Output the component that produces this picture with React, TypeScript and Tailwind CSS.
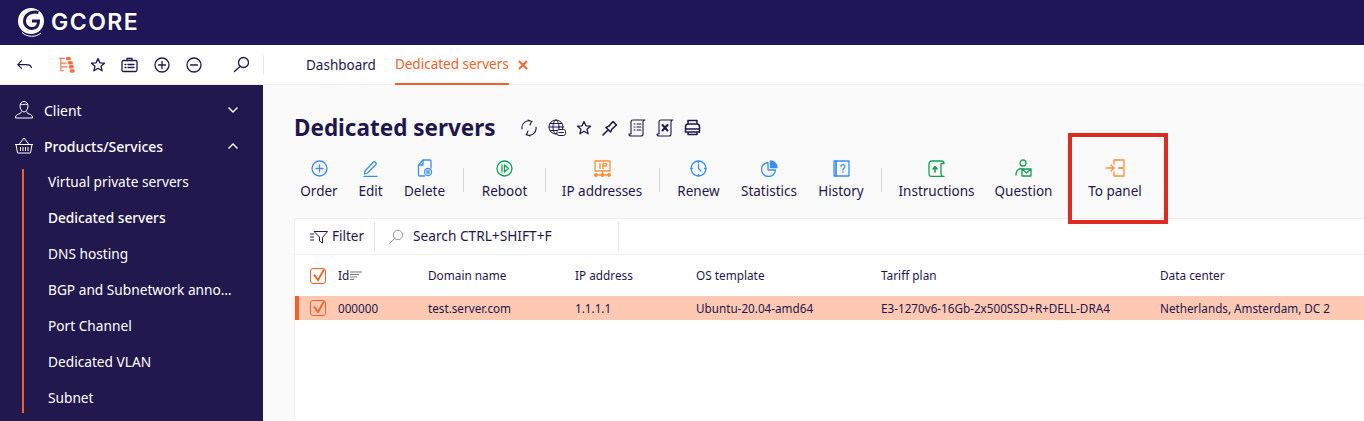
import React from "react";

const navy = "#1f1650";

function Ic({ children, w = 20, h = 20, vb = "0 0 20 20", c = navy, sw = 1.3 }: { children: React.ReactNode; w?: number; h?: number; vb?: string; c?: string; sw?: number }) {
  return (
    <svg width={w} height={h} viewBox={vb} fill="none" stroke={c} strokeWidth={sw} strokeLinecap="round" strokeLinejoin="round" className="shrink-0">
      {children}
    </svg>
  );
}

const Star = ({ c = navy }: { c?: string }) => (
  <Ic w={16} h={16} c={c} vb="0 0 16 16"><path d="M8 1.500l1.900 4.300 4.600.4-3.500 3 1.100 4.600L8 11.300l-4.100 2.500L5 9.200l-3.500-3 4.600-.4z" /></Ic>
);

function Action({ label, icon, cls }: { label: string; icon: React.ReactNode; cls: string }) {
  return (
    <div className={`flex flex-col items-center shrink-0 ${cls}`}>
      <div className="h-[20px] flex items-center justify-center">{icon}</div>
      <div className="mt-[4px] text-[13.5px] leading-[18px] whitespace-nowrap text-[#1f1650]">{label}</div>
    </div>
  );
}

const Sep = ({ cls }: { cls: string }) => <div className={`w-px h-[24px] bg-[#d5d5d9] shrink-0 mt-[10px] ${cls}`} />;

const blue = "#3b8ff3";
const green = "#12a150";
const orange = "#f7923a";

function Check() {
  return (
    <div className="w-[16px] h-[16px] rounded-[3px] border border-[#f4602a] flex items-center justify-center relative">
      <svg width="16" height="16" viewBox="0 0 16 16" fill="none" stroke="#f4602a" strokeWidth="1.800" className="absolute -top-[2px] left-0">
        <path d="M3 7.500l4 5.500L13 2.500" />
      </svg>
    </div>
  );
}

const sub = ["Virtual private servers", "Dedicated servers", "DNS hosting", "BGP and Subnetwork anno…", "Port Channel", "Dedicated VLAN", "Subnet"];

const cols: [string, string, string][] = [
  ["w-[147px]", "Domain name", "test.server.com"],
  ["w-[121px]", "IP address", "1.1.1.1"],
  ["w-[185px]", "OS template", "Ubuntu-20.04-amd64"],
  ["w-[279px]", "Tariff plan", "E3-1270v6-16Gb-2x500SSD+R+DELL-DRA4"],
  ["w-[190px]", "Data center", "Netherlands, Amsterdam, DC 2"],
];

export default function App() {
  return (
    <div className="w-[1364px] h-[421px] overflow-hidden bg-white flex flex-col text-[#1f1650] font-['Noto_Sans','Open_Sans',sans-serif]">
      <header className="h-[45px] shrink-0 bg-[#1e1656] flex items-center pl-[17px]">
        <svg width="28" height="31" viewBox="0 0 28 31" className="shrink-0">
          <circle cx="14" cy="14" r="13" fill="#fff" />
          <path d="M21.500 5.500C14 3.500 7.500 8 7.500 14c0 5 4 7.500 7.500 7.500 4.500 0 6.500-3.500 6.500-7.500H15" fill="none" stroke="#1e1656" strokeWidth="3" />
          <path d="M5 25.500c5 5 14 5 19 .5" fill="none" stroke="#fff" strokeWidth="1" />
        </svg>
        <span className="ml-[6px] text-white font-['Inter',sans-serif] font-semibold text-[23px] tracking-[1.500px] leading-none">GCORE</span>
      </header>

      <div className="h-[40px] shrink-0 bg-white flex items-center border-b border-[#eeeeef]">
        <div className="w-[264px] h-[20px] flex items-center pl-[16px] relative">
          <Ic w={18} h={12} vb="0 0 20 14"><path d="M6 2L1.500 6.500 6 11M1.500 6.500h10c3 0 5.500.8 6 3.500" /></Ic>
          <div className="ml-[24px]">
            <svg width="17" height="18" viewBox="0 0 18 18" fill="none" stroke="#f77b4a" strokeWidth="1.200">
              <path d="M1 2h6M3 2v13h3M3 7h6M3 11h7" />
              <rect x="9" y="1" width="4" height="2.500" fill="#f4602a" rx=".6" />
              <rect x="11" y="5.500" width="4" height="2.500" fill="#f4602a" rx=".6" />
              <rect x="12" y="9.500" width="4" height="2.500" fill="#f4602a" rx=".6" />
              <rect x="13" y="14" width="4" height="2.500" fill="#f4602a" rx=".6" />
            </svg>
          </div>
          <div className="ml-[15px]"><Star /></div>
          <div className="ml-[15px]">
            <Ic w={17} h={16} vb="0 0 17 16"><rect x="1" y="3.500" width="15" height="11" rx="1.500" /><path d="M6 3.500V1.500h5v2M4 7.500h1M4 10.500h1M7 7.500h6M7 10.500h6" /></Ic>
          </div>
          <div className="ml-[16px]">
            <Ic w={16} h={16} vb="0 0 16 16"><circle cx="8" cy="8" r="7" /><path d="M8 4.500v7M4.500 8h7" /></Ic>
          </div>
          <div className="ml-[16px]">
            <Ic w={16} h={16} vb="0 0 16 16"><circle cx="8" cy="8" r="7" /><path d="M4.500 8h7" /></Ic>
          </div>
          <div className="ml-[31px]">
            <Ic w={17} h={17} vb="0 0 17 17"><circle cx="10.500" cy="6.500" r="5" /><path d="M7 10.500L1.500 15.500" /></Ic>
          </div>
          <div className="absolute right-0 top-0 h-[20px] w-px bg-[#e8e8ea]" />
        </div>
        <div className="ml-[42px] text-[13.5px] leading-[40px]">Dashboard</div>
        <div className="ml-[19px] h-[40px] flex items-center text-[13.5px] text-[#f4602a]">
          <div className="h-[40px] leading-[38px] border-b-2 border-[#f4602a] whitespace-nowrap">Dedicated servers</div>
          <svg width="10" height="10" viewBox="0 0 10 10" stroke="#f4602a" strokeWidth="1.800" className="ml-[9px] mt-[1px]"><path d="M1 1l8 8M9 1L1 9" /></svg>
        </div>
      </div>

      <div className="flex flex-1 min-h-0">
        <aside className="w-[263px] shrink-0 bg-[#21184e] text-white text-[14px] pt-[7px]">
          <div className="h-[36px] flex items-center pl-[14px] pr-[24px]">
            <svg width="20" height="20" viewBox="0 0 20 20" fill="none" stroke="#fff" strokeWidth="1"><path d="M6 6c0-3 2-4.500 4-4.500S14 3 14 6s-2 6-4 6-4-3-4-6zM6.500 4C9 5.500 11 3.500 13 4.500M7.500 11.500c-.3 2-2 2-4 3-1.500.7-2 2-2 3.500h17c0-1.500-.5-2.800-2-3.500-2-1-3.700-1-4-3" /></svg>
            <span className="ml-[10px] flex-1">Client</span>
            <svg width="12" height="8" viewBox="0 0 12 8" fill="none" stroke="#fff" strokeWidth="1.400"><path d="M1.500 1.500L6 6l4.500-4.500" /></svg>
          </div>
          <div className="h-[36px] flex items-center pl-[14px] pr-[24px]">
            <svg width="20" height="20" viewBox="0 0 20 20" fill="none" stroke="#fff" strokeWidth="1"><path d="M1 8.500h18M2 8.500l1.500 8.500h13L18 8.500M5 8.500L10 2l5 6.500M6.500 11v4M9 11v4M11.500 11v4M14 11v4" /></svg>
            <span className="ml-[10px] flex-1 font-medium">Products/Services</span>
            <svg width="12" height="8" viewBox="0 0 12 8" fill="none" stroke="#fff" strokeWidth="1.400"><path d="M1.500 6.500L6 2l4.500 4.500" /></svg>
          </div>
          <div className="ml-[22px] relative">
            <div className="absolute left-0 top-[5px] bottom-[3px] w-[2px] bg-[#f4602a]" />
            {sub.map((s, i) => (
              <div key={s} className={`h-[36px] flex items-center pl-[26px] whitespace-nowrap text-[13.7px] ${i === 1 ? "font-medium" : ""}`}>{s}</div>
            ))}
          </div>
        </aside>

        <main className="flex-1 bg-[#fafafa] pl-[31px] min-w-0">
          <div className="flex items-center pt-[26px] h-[59px]">
            <h1 className="text-[22.5px] font-bold leading-[32px] whitespace-nowrap w-[226px]">Dedicated servers</h1>
            <div className="flex items-center gap-[10px]">
              <Ic w={18} h={18} vb="0 0 18 18" sw={1.100}><path d="M2 10A7 7 0 0 1 12 2.500M6 15.500A7 7 0 0 0 16 8M8 1l3.500 1.500L10 6M10 17l-3.500-1.500L8 12" /></Ic>
              <Ic w={18} h={18} vb="0 0 18 18" sw={1}><circle cx="8" cy="8" r="7" /><ellipse cx="8" cy="8" rx="3" ry="7" /><path d="M1 8h14M2 4.500h12M2 11.500h12" /><rect x="9" y="10.500" width="8.500" height="6" rx="2" fill="#fafafa" /><path d="M11 13.500h4.500" /></Ic>
              <Star />
              <Ic w={16} h={16} vb="0 0 16 16"><path d="M1 15l5-5M4 7.500L8.500 12 10 9l4.500-4L11 1.500l-4 4.500z" strokeWidth="1.600" /></Ic>
              <Ic w={18} h={18} vb="0 0 18 18" sw={1.100}><path d="M1 15c0 1.500 1 2 2 2h10c1 0 2-.5 2-2V3c0-1 .8-2 2-2H5c-1 0-2 1-2 2v12H1zM6 5h1M6 8h1M6 11h1M9 5h4M9 8h4M9 11h4" /></Ic>
              <Ic w={18} h={18} vb="0 0 18 18" sw={1.100}><path d="M1 15c0 1.500 1 2 2 2h10c1 0 2-.5 2-2V3c0-1 .8-2 2-2H5c-1 0-2 1-2 2v12H1z" /><path d="M6.500 6l5 5.500M11.500 6l-5 5.500" strokeWidth="2" /></Ic>
              <Ic w={17} h={17} vb="0 0 17 17"><path d="M4 5V1.500h9V5M1.500 8c0-2 1-3 2.500-3h9c1.500 0 2.500 1 2.500 3v5h-14zM4 13v2.500h9V13M1.500 10h14" strokeWidth="1.500" /></Ic>
            </div>
          </div>

          <div className="flex items-start mt-[14px] h-[60px] relative">
            <Action cls="ml-[6px] w-[38px]" label="Order" icon={<Ic w={17} h={17} vb="0 0 17 17" c={blue}><circle cx="8.500" cy="8.500" r="7.500" /><path d="M8.500 5v7M5 8.500h7" /></Ic>} />
            <Action cls="ml-[20px] w-[25px]" label="Edit" icon={<Ic w={16} h={17} vb="0 0 16 17" c={blue}><path d="M2 11L10.500 2c1-1 3.500 1.500 2.500 2.500L4.500 13 1.500 14zM1 16.500h13" /></Ic>} />
            <Action cls="ml-[20px] w-[43px]" label="Delete" icon={<Ic w={16} h={18} vb="0 0 16 18" c={blue}><path d="M6 1h7c.5 0 1 .5 1 1v7M6 1L1.500 6v10c0 .5.5 1 1 1h5M6 1v5H1.500" /><circle cx="11" cy="13" r="3.500" /><path d="M9.800 11.800l2.400 2.400M12.200 11.800l-2.400 2.400" /></Ic>} />
            <Sep cls="ml-[17px]" />
            <Action cls="ml-[17px] w-[47px]" label="Reboot" icon={<Ic w={17} h={17} vb="0 0 17 17" c={green}><circle cx="8.500" cy="8.500" r="7.500" /><path d="M6 5v7M8.500 5l4 3.500-4 3.500z" /></Ic>} />
            <Sep cls="ml-[17px]" />
            <Action cls="ml-[16px] w-[80px]" label="IP addresses" icon={<Ic w={17} h={17} vb="0 0 17 17" c={orange}><rect x="1" y="1" width="15" height="10" /><path d="M6 3.500v5M9 8.500v-5h2.500c1.500 0 1.500 2.500 0 2.500H9M1 15h15M8.500 11v4" /><circle cx="2" cy="15" r="1.300" fill={orange} /><circle cx="8.500" cy="15" r="1.300" fill={orange} /><circle cx="15" cy="15" r="1.300" fill={orange} /></Ic>} />
            <Sep cls="ml-[17px]" />
            <Action cls="ml-[17px] w-[43px]" label="Renew" icon={<Ic w={17} h={17} vb="0 0 17 17" c={blue}><circle cx="8.500" cy="8.500" r="7.500" /><path d="M8.500 4.500v4l2.500 2.500M8.500 1v1.500M8.500 14.500V16M1 8.500h1.500M14.500 8.500H16" /></Ic>} />
            <Action cls="ml-[20px] w-[58px]" label="Statistics" icon={<Ic w={17} h={17} vb="0 0 17 17" c={blue}><path d="M7 2.500a7 7 0 1 0 7.500 7.500H7z" /><path d="M9.500 1a6.500 6.500 0 0 1 6.500 6.500H9.500z" fill={blue} /></Ic>} />
            <Action cls="ml-[20px] w-[46px]" label="History" icon={<Ic w={17} h={17} vb="0 0 17 17" c={blue}><rect x="1" y="1" width="15" height="15" /><path d="M3 1v15" strokeWidth="1.800" /><path d="M8 6.500c0-2.500 4-2.500 4 0 0 1.500-2 1.500-2 3.500M10 12v.5" /></Ic>} />
            <Sep cls="ml-[17px]" />
            <Action cls="ml-[17px] w-[75px]" label="Instructions" icon={<Ic w={17} h={17} vb="0 0 17 17" c={green}><path d="M1 4c0-2 1-3 3-3h9.500c1.500 0 2.500 1 2.500 2.500h-3V14c0 1.500 1 2.500 3 2.500H4c-2 0-3-1-3-2.500z" /><path d="M7 12V7M5 9l2-2.500L9 9" strokeWidth="1.600" /></Ic>} />
            <Action cls="ml-[20px] w-[59px]" label="Question" icon={<Ic w={17} h={18} vb="0 0 17 18" c={green}><circle cx="8" cy="4" r="3" /><path d="M1 16c0-4 2-6 5-6.500M7 10h9v7H7zM7 10l4.500 4 4.500-4" /></Ic>} />
            <Action cls="ml-[35px] w-[54px]" label="To panel" icon={<Ic w={20} h={18} vb="0 0 20 18" c={orange}><path d="M9 1h10v16H9v-4M9 5V1M1 9h8M6 6l3 3-3 3" /><path d="M14 9h3" strokeWidth="2" /></Ic>} />
            <div className="absolute left-[774px] -top-[25px] w-[100px] h-[91px] border-[4px] border-[#df2a21]" />
          </div>

          <div className="bg-white border-t border-l border-[#eeeeef] rounded-tl-[3px] h-[203px]">
            <div className="h-[36px] flex items-center border-b border-[#eeeeef] pl-[15px]">
              <Ic w={18} h={14} vb="0 0 18 14" sw={1}><path d="M0.500 4h3M0.500 7h3M0.500 10h3M4.500 1.500h13l-5 6V13l-3-2V7.500z" /></Ic>
              <span className="ml-[4px] text-[13.5px]">Filter</span>
              <div className="h-[29px] w-px bg-[#e4e4e6] ml-[10px]" />
              <div className="ml-[13px]"><Ic w={16} h={16} vb="0 0 16 16" c="#9a9a9e" sw={1}><circle cx="10" cy="6" r="4.700" /><path d="M6.500 9.500L1.500 14.500" /></Ic></div>
              <span className="ml-[9px] text-[13.7px] w-[205px] whitespace-nowrap">Search CTRL+SHIFT+F</span>
              <div className="h-[29px] w-px bg-[#e4e4e6]" />
            </div>
            <div className="h-[41px] flex items-center pl-[15px] text-[11.800px]">
              <div className="w-[28px]"><Check /></div>
              <div className="w-[90px] flex items-center">
                Id
                <svg width="12" height="10" viewBox="0 0 12 10" stroke="#777" strokeWidth="1" className="ml-[1px]"><path d="M0 1h12M0 3.500h9M0 6h7M0 8.500h4" /></svg>
              </div>
              {cols.map(([w, h]) => <div key={h} className={`${w} whitespace-nowrap`}>{h}</div>)}
            </div>
            <div className="h-[24px] flex items-center bg-[#fec9b2] border-l-[4px] border-[#f4602a] pl-[11px] text-[11.700px]">
              <div className="w-[28px]"><Check /></div>
              <div className="w-[90px] pt-[1px]">000000</div>
              {cols.map(([w, h, v]) => <div key={h} className={`${w} whitespace-nowrap pt-[1px]`}>{v}</div>)}
            </div>
          </div>
        </main>
      </div>
    </div>
  );
}
